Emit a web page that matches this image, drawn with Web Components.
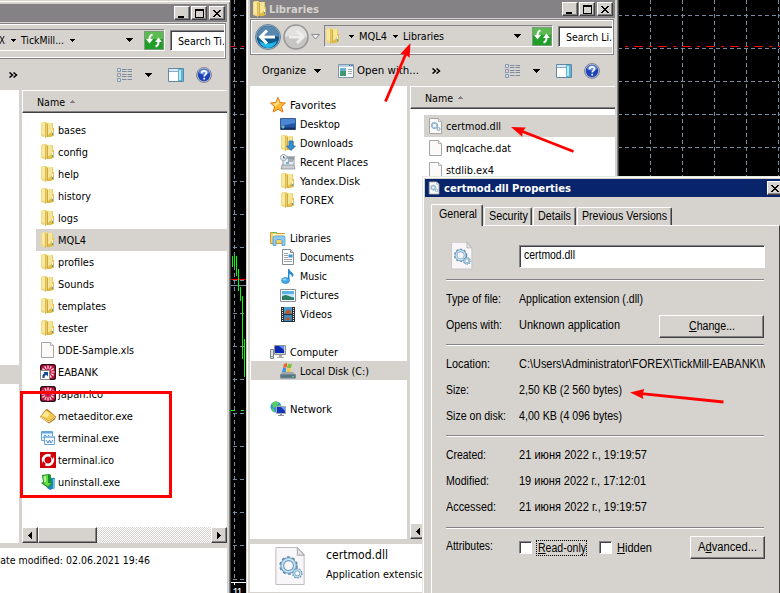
<!DOCTYPE html>
<html lang="en"><head><meta charset="utf-8"><title>Desktop</title>
<style>
html,body{margin:0;height:593px;overflow:hidden;background:#000}
body{position:relative;font:11px/19px "DejaVu Sans Condensed","DejaVu Sans",sans-serif;color:#000}
price-chart,mark-layer{position:absolute;left:0;top:0}
explorer-window{position:absolute}
#w1{left:-142px;top:0}
#w2{left:246px;top:-4px}
prop-dialog{position:absolute;left:422px;top:176px}
</style></head><body>
<price-chart></price-chart>

<explorer-window id="w1" query="Search Ti..." qw="53">
  <span slot="crumbs" style="display:flex;align-items:center;padding-left:62px"><fit-text w="6">X</fit-text><ui-icon name="down" style="margin:0 5px 0 6px"></ui-icon><fit-text w="43">TickMill...</fit-text><ui-icon name="down" style="margin-left:6px"></ui-icon></span>
  <tree-item slot="tree" style="margin-top:266px" selected></tree-item>
  <file-item slot="files" icon="folder" w="28">bases</file-item>
  <file-item slot="files" icon="folder" w="30">config</file-item>
  <file-item slot="files" icon="folder" w="21">help</file-item>
  <file-item slot="files" icon="folder" w="33">history</file-item>
  <file-item slot="files" icon="folder" w="20">logs</file-item>
  <file-item slot="files" icon="folder" w="28" selected>MQL4</file-item>
  <file-item slot="files" icon="folder" w="36">profiles</file-item>
  <file-item slot="files" icon="folder" w="36">Sounds</file-item>
  <file-item slot="files" icon="folder" w="48">templates</file-item>
  <file-item slot="files" icon="folder" w="30">tester</file-item>
  <file-item slot="files" icon="file" w="76">DDE-Sample.xls</file-item>
  <file-item slot="files" icon="shortcut" w="40">EABANK</file-item>
  <file-item slot="files" icon="japan" w="45">japan.ico</file-item>
  <file-item slot="files" icon="editor" w="75">metaeditor.exe</file-item>
  <file-item slot="files" icon="term" w="61">terminal.exe</file-item>
  <file-item slot="files" icon="red" w="56">terminal.ico</file-item>
  <file-item slot="files" icon="uninst" w="62">uninstall.exe</file-item>
  <div slot="details" style="padding:3px 0 0 131px"><fit-text w="157">Date modified: 02.06.2021 19:46</fit-text></div>
</explorer-window>

<explorer-window id="w2" heading="Libraries" query="Search Li..." qw="52">
  <span slot="crumbs" style="display:flex;align-items:center"><ui-icon name="folder" style="margin-right:8px"></ui-icon><ui-icon name="down" style="margin-right:5px"></ui-icon><fit-text w="28">MQL4</fit-text><ui-icon name="down" style="margin:0 5px 0 6px"></ui-icon><fit-text w="41">Libraries</fit-text></span>
  <tree-item slot="tree" icon="star" w="46" top>Favorites</tree-item>
  <tree-item slot="tree" icon="desktop" w="40">Desktop</tree-item>
  <tree-item slot="tree" icon="downloads" w="53">Downloads</tree-item>
  <tree-item slot="tree" icon="recent" w="68">Recent Places</tree-item>
  <tree-item slot="tree" icon="folder" w="60">Yandex.Disk</tree-item>
  <tree-item slot="tree" icon="folder" w="34">FOREX</tree-item>
  <tree-item slot="tree" icon="libs" w="41" top style="margin-top:19px">Libraries</tree-item>
  <tree-item slot="tree" icon="docs" w="54">Documents</tree-item>
  <tree-item slot="tree" icon="music" w="27">Music</tree-item>
  <tree-item slot="tree" icon="pics" w="39">Pictures</tree-item>
  <tree-item slot="tree" icon="video" w="32">Videos</tree-item>
  <tree-item slot="tree" icon="computer" w="48" top style="margin-top:19px">Computer</tree-item>
  <tree-item slot="tree" icon="disk" w="69" selected>Local Disk (C:)</tree-item>
  <tree-item slot="tree" icon="network" w="42" top style="margin-top:19px">Network</tree-item>
  <file-item slot="files" icon="dll" w="55" selected>certmod.dll</file-item>
  <file-item slot="files" icon="file" w="65">mqlcache.dat</file-item>
  <file-item slot="files" icon="file" w="48">stdlib.ex4</file-item>
  <div slot="details" style="display:flex;padding:3px 0 0 25px"><ui-icon name="bigdll" style="width:31px;height:39px;margin-right:20px"></ui-icon><div style="margin-top:-1px"><fit-text w="62" style="font-size:13px;line-height:18px">certmod.dll</fit-text><br><fit-text w="104">Application extension</fit-text></div></div>
</explorer-window>

<prop-dialog></prop-dialog>
<mark-layer></mark-layer>

<script>
const F='#d6d3ce', G='#848284', D='#424142';
const page='<path d="M1.500.5h9l3 3v12h-12z" fill="#fbfaf8" stroke="#a5a5a5"/><path d="M10.500 .5v3h3" fill="#e8e8e8" stroke="#b5b5b5"/>';
const gear=(x,y,r,s)=>`<g transform="translate(${x} ${y})" fill="none"><circle r="${r+s*.45}" stroke="#5a86a8" stroke-width="${s*.6}" stroke-dasharray="${r*.42} ${r*.4}"/><circle r="${r}" stroke="#6b9cc0" stroke-width="${s}"/><circle r="${r}" stroke="#cbe4f5" stroke-width="${s*.45}"/></g>`;
const folder='<path d="M1 1l2-1h4v15H4l-3-1z" fill="#f0da82"/><path d="M6 1h7v13l-4 1H6z" fill="#ebcf66"/><path d="M2 1h3v12l-3-1z" fill="#f9e9a0"/><path d="M5 1h1v15H5z" fill="#d9b958"/><path d="M7 2h1v13H7z" fill="#cda944"/><path d="M8 1h4v8l-4 4z" fill="#f6e497"/><path d="M8 13l5-3v4l-3 1H8z" fill="#dfbb48"/><path d="M13 6h1v8h-1z" fill="#e2bd4b"/><path d="M12 8h1v3h-1z" fill="#fff"/><path d="M12 11h1v2h-1z" fill="#3ba2d8"/>';
const rays=Array.from({length:12},(_,i)=>`<path d="M8 8L7.200 1.500h1.600z" fill="#fbe4ea" transform="rotate(${i*30} 8 8)"/>`).join('');
const japan=`<rect x=".5" y=".5" width="15" height="15" rx="3" fill="#c3123f" stroke="#2b1118" stroke-width="1.500"/>${rays}<circle cx="8" cy="8" r="3" fill="#d0103c"/>`;
const ICONS={
 folder,
 file:page,
 dll:page+gear(6.500,7.500,2.4,1.5)+gear(10.500,11,1.300,1),
 shortcut:japan+'<path d="M.5 6.500h9v9h-9z" fill="#fff" stroke="#8a8a8a"/><path d="M2.500 14c-.5-3 .5-4.500 2-4.500L3.500 8H8v4.500L6.500 11c-1.500 0-2 1-2 3z" fill="#174a94"/>',
 japan,
 editor:'<path d="M0 9l6-8 2 .5 8 7-1 3-6 4z" fill="#b67a16"/><path d="M1 8l5-6 9 6-6 5z" fill="#f4c94f"/><path d="M2 8l4-5 4 2.500-3 4z" fill="#ffe795"/><path d="M1 9l8 5 6-5" stroke="#fff0b0" fill="none"/>',
 term:'<path d="M1.500 1.500h11v9h-11z" fill="#eaf5fd" stroke="#66a4d8"/><path d="M2 1.500h10v2H2z" fill="#65a8e0"/><path d="M3 8l2-3 2 2 2-2" stroke="#5b9bd5" fill="none"/><path d="M4.500 6.500h10v8h-10z" fill="#f6fbff" stroke="#66a4d8"/><path d="M5 6h9v2H5z" fill="#8dbfe9"/><path d="M6 10l2 3 1.500-3L11 13l2-3" stroke="#4a86c0" fill="none"/>',
 red:'<path d="M0 0h16v16H0z" fill="#cf0006"/><circle cx="8" cy="8" r="4.800" fill="none" stroke="#fff" stroke-width="2.800"/><path d="M10 4l4-3-1 6zM6 12l-4 3 1-6z" fill="#cf0006"/><ellipse cx="8" cy="8" rx="3" ry="1.800" fill="#cf0006" transform="rotate(-40 8 8)"/>',
 uninst:'<path d="M8 4h7v10l-5 2-3-2z" fill="#2583c3"/><path d="M13 5h2v9l-2 1z" fill="#6bc0ed"/><path d="M2 1l7-1 2 1v7l2 1-5 5-7-5 2-1z" fill="#18922c"/><path d="M3 2l5-1v8h3l-3 3.500L3 9h1z" fill="#65dc45"/><path d="M4 2l2 0v6H4z" fill="#baf592"/>',
 star:'<path d="M8 .5l2.200 5 5.300.5-4 3.500 1.500 5.500L8 12.200 3.200 15l1.300-5.500-4-3.500 5.300-.5z" fill="#ffb92e" stroke="#e07a18"/><path d="M8 2.500L9.300 6 6 9 3 7l3.500-.8z" fill="#ffe694"/>',
 desktop:'<path d="M.5 2.500h15v11H.5z" fill="#2455a4" stroke="#365d8c"/><path d="M1 3h14v4L1 10z" fill="#4a86d4"/><path d="M1 11.500h14v2H1z" fill="#172c59"/><circle cx="3" cy="11" r="1.500" fill="#50c0f0"/><path d="M1.500 10h1.500v1H1.500z" fill="#f58a20"/>',
 downloads:folder+'<path d="M9 6h4v5h2.500L11 15.500 6.500 11H9z" fill="#2f8fdc" stroke="#1b65ac" stroke-width=".7"/>',
 recent:'<path d="M3 4h11v8H3z" fill="#e8eef2" stroke="#929ba2"/><path d="M7 3h8M8 5h6M8 7h5" stroke="#63727f"/><path d="M2 11h12l1 4H1z" fill="#c8ced3" stroke="#818a91" stroke-width=".7"/><circle cx="3.500" cy="3.500" r="3" fill="#f0f5f8" stroke="#8fa0ac"/><path d="M3.500 2v2H5" stroke="#456" fill="none"/><path d="M6 8h3v2H6z" fill="#6bb0dd"/>',
 libs:'<path d="M.5 2.500h5l1 1h8v10H.5z" fill="#f1d36a" stroke="#c99a38"/><path d="M3 4h12v3H3z" fill="#fff1b0"/><path d="M2 2h5v1H2z" fill="#63b956"/><path d="M3 7l2-1h9l1 1v8.500h-3v-5l-1-1H7l-1 1v5H3z" fill="#8dcbf0" stroke="#4794c9" stroke-width=".7"/>',
 docs:'<path d="M2.500.5h8l3 3v12h-11z" fill="#fff" stroke="#828b92"/><path d="M10.500.5v3h3" fill="#ddd" stroke="#828b92"/><path d="M4 4.500h4M4 6.500h4M4 8.500h4M4 10.500h8M4 12.500h8" stroke="#9aa5ae"/><path d="M8.500 5.500h4v3h-4z" fill="#3d94d0"/>',
 music:'<path d="M8 1h1.500c0 3 4 3 4 6.500l-1.500 2c0-3-2-3.500-2.500-3.500v6H8z" fill="#288acb"/><ellipse cx="5.500" cy="12.500" rx="4" ry="3" fill="#43aaea" stroke="#1a76b7" stroke-width=".6"/><ellipse cx="4.500" cy="11.500" rx="2" ry="1" fill="#93d7fa"/>',
 pics:'<path d="M.5 2.500h15v12H.5z" fill="#fff" stroke="#8b9299"/><path d="M2 4h12v9H2z" fill="#59b4e3"/><path d="M2 7h12v3H2z" fill="#bfe6f2"/><path d="M2 9l4-1 8 3v2H2z" fill="#2c7d65"/>',
 video:'<path d="M1 1h14v15H1z" fill="#292e33"/><path d="M4 1h8v7H4z" fill="#4a9fd0"/><path d="M4 9h8v6H4z" fill="#3b89bf"/><path d="M5 6l3-3 3 2v3H5zM6 12l3-1 2 3H5z" fill="#ad5d3d"/><path d="M2.500 2v14M13.500 2v14" stroke="#e8eef2" stroke-dasharray="1 1"/>',
 computer:'<path d="M4.500 1.500h11v9h-11z" fill="#cfd3d6" stroke="#8c9298"/><path d="M5 2h9v7H5z" fill="#0b26b5"/><path d="M9 2h5v4z" fill="#5f8df0"/><path d="M9 11h3v2h2v1H7v-1h2z" fill="#aaa"/><path d="M.5 5.500h3v9h-3z" fill="#dfe2e4" stroke="#7e8589"/><path d="M1 12h2v1H1z" fill="#4fc34b"/>',
 disk:'<path d="M2 9h11l2.500 3v3.500H.5V12z" fill="#9ba5ad"/><path d="M.5 11.500h15v3.500H.5z" fill="#557584" stroke="#7d8990"/><path d="M12 13h2v1h-2z" fill="#53df67"/><path d="M4 1l3-1v4l-4 1z" fill="#f0642a"/><path d="M8 1h4l-1 4H7z" fill="#7cc23f"/><path d="M3 5l3-.5V9L2 9z" fill="#3e95e4"/><path d="M7 5.500h4L10 9H7z" fill="#f8c832"/>',
 network:'<circle cx="6" cy="6" r="5.500" fill="#2c8fdd"/><path d="M2 2l4-2 3 2-3 4-3 1zM1 7l3 1 1 3-2 0zM8 4l3 0-1 4z" fill="#5bd061"/><path d="M6.500 5.500h9v7h-9z" fill="#1733b8" stroke="#a5acb4"/><path d="M11 6h4v4z" fill="#6f9df0"/><path d="M10 13h2v1h2v1H8v-1h2z" fill="#8b9298"/>',
 views:'<path d="M1.500 1.500h3v3h-3zM1.500 6.500h3v3h-3zM1.500 11.500h3v3h-3z" fill="#fff" stroke="#8598ad"/><path d="M2.500 2.500h1v1h-1z" fill="#4a7fc0"/><path d="M2.500 7.500h1v1h-1z" fill="#d03030"/><path d="M2.500 12.500h1v1h-1z" fill="#4a7fc0"/><path d="M6 2.500h10M6 4.500h10M6 7.500h10M6 9.500h10M6 12.500h10" stroke="#7a8b9f" stroke-dasharray="4.500 1"/>',
 pane:'<path d="M.5 1.500h15v13H.5z" fill="#fff" stroke="#5f88a8"/><path d="M1 2h14v2H1z" fill="#dcebf5"/><path d="M1 4.500h9" stroke="#88a8c4"/><path d="M10 2h5v12h-5z" fill="#5fb4d0"/><path d="M11 3h2v10h-2z" fill="#b6e9f5"/>',
 help:'<circle cx="8" cy="8" r="7.500" fill="#b8bdc9" stroke="#82889a"/><circle cx="8" cy="8" r="6.200" fill="#1c43b8"/><path d="M3 6a5.200 5.200 0 0 1 10 0q-5 3-10 0" fill="#6f95e4"/><path d="M5.700 6.300c0-3.300 4.800-3 4.800-.4 0 1.700-2.300 1.700-2.300 3.600M8.200 10.800v1.700" stroke="#fff" stroke-width="1.700" fill="none"/>',
 open:'<path d="M.5 1.500h15v13H.5z" fill="#fff" stroke="#8096ad"/><path d="M1 2h14v2H1z" fill="#b9cfe6"/><path d="M11 2.500h4" stroke="#345d8d" stroke-dasharray="1 .7"/><path d="M2 5h6v8H2z" fill="#3f9774"/><path d="M2 5h6v3H2z" fill="#67aed0"/><path d="M10 6.500h4M10 8.500h4M10 10.500h4" stroke="#9aaabb"/>',
 bigdll:'<path d="M.5.500h22l7 7v31H.5z" fill="#f8f6f8" stroke="#bdbabc"/><path d="M22.500.5v8h7z" fill="#e4e4e6" stroke="#a9a9ad"/>'+gear(13.500,19,6.500,4)+gear(22.500,27,3.500,2.500),
 down:'<path d="M0 0h5v1H4v1H3v1H2V2H1V1H0z"/>',
 drop:'<path d="M0 0h7v1H6v1H5v1H4v1H3V3H2V2H1V1H0z"/>',
 sort:'<path d="M0 3h5V2H4V1H3V0H2v1H1v1H0z" fill="#848284"/>',
 more:'<path d="M.5.5l3 2.500-3 2.500M4.500.5l3 2.500-3 2.500" fill="none" stroke="#000" stroke-width="1.500"/>',
 go:'<rect x=".5" y=".5" width="19" height="18" fill="#1f9f2a" stroke="#7c9d7c"/><path d="M1 1h18v7H1z" fill="#5bbb52"/><path d="M8.500 3.500C6.500 4 5.500 5.500 5.500 8.500M11.500 15.500c2-.5 3-2 3-5" stroke="#fff" stroke-width="2" fill="none"/><path d="M2 8h7l-3.500 4.500zM11 11h7l-3.500-4.500z" fill="#fff"/>',
 back:'<circle cx="13" cy="13" r="12.500" fill="#a9bccb" stroke="#65819a"/><circle cx="13" cy="13" r="11.300" fill="#11588f"/><path d="M2 13a11 11 0 0 1 22 0q-11-4-22 0" fill="#5988ae"/><path d="M4 17q9 5 18 0-3 7-9 7t-9-7" fill="#21b9ec"/><path d="M12 6.500L5.500 13l6.500 6.500M6 13h14" stroke="#fff" stroke-width="3" fill="none"/>',
 fwd:'<circle cx="13" cy="13" r="12" fill="#c6c5c3" stroke="#969696" stroke-width="1.500"/><path d="M2 13a11 11 0 0 1 22 0q-11-4-22 0" fill="#e2e1df"/><path d="M14 7l6 6-6 6M6 13h13" stroke="#efeeed" stroke-width="3" fill="none"/>',
 hist:'<path d="M.5.5h8L4.500 5z" fill="#eee" stroke="#8b8d98"/>',
 left:'<path d="M4 0v7H3V6H2V5H1V4H0V3h1V2h1V1h1V0z"/>',
 right:'<path d="M0 0v7h1V6h1V5h1V4h1V3H3V2H2V1H1V0z"/>',
 min:'<path d="M0 7h6v2H0z"/>',
 max:'<path d="M0 0h9v9H0zM1 2v6h7V2z" fill-rule="evenodd"/>',
 close:'<path d="M0 1h2v1h1v1h2V2h1V1h2v1H7v1H6v1H5v1h1v1h1v1h1v1H6V7H5V6H3v1H2v1H0V7h1V6h1V5h1V4H2V3H1V2H0z"/>'
};
const SZ={down:[5,3],drop:[7,4],sort:[5,3],more:[9,6],go:[20,19],back:[26,26],fwd:[26,26],hist:[9,6],left:[4,7],right:[4,7],min:[8,9],max:[9,9],close:[8,9],bigdll:[31,40]};
const make=(name,html)=>customElements.define(name,class extends HTMLElement{
  constructor(){super();this.attachShadow({mode:'open'})}
  connectedCallback(){this.shadowRoot.innerHTML=typeof html==='function'?html(this):html}
});
make('ui-icon',e=>{const n=e.getAttribute('name'),[w,h]=SZ[n]||[16,16];
  return `<style>:host{display:block;flex:none;width:${w}px;height:${h}px}svg{display:block;width:100%;height:100%}</style><svg viewBox="0 0 ${w} ${h}">${ICONS[n]||''}</svg>`});
/* Text condensed or widened to a fixed advance. */
customElements.define('fit-text',class extends HTMLElement{
  constructor(){super();this.attachShadow({mode:'open'}).innerHTML='<style>:host{display:inline-block;flex:none;white-space:nowrap;vertical-align:top}span{display:inline-block;transform-origin:0 50%;white-space:nowrap}</style><span><slot></slot></span>'}
  connectedCallback(){const w=+this.getAttribute('w');this.style.width=w+'px';const s=this.shadowRoot.querySelector('span');const n=s.getBoundingClientRect().width;if(n)s.style.transform=`scaleX(${w/n})`}
});
make('tree-item',e=>`<style>:host{display:flex;align-items:center;height:19px;line-height:19px;margin-left:1px;padding-left:${e.hasAttribute('top')?19:29}px;gap:4px}:host([selected]){background:${F}}fit-text{padding-top:2px}</style>${e.hasAttribute('icon')?`<ui-icon name="${e.getAttribute('icon')}"></ui-icon><fit-text w="${e.getAttribute('w')}">${e.textContent}</fit-text>`:''}`);
make('file-item',e=>`<style>:host{display:flex;align-items:center;height:22px;line-height:22px;margin-left:14px;padding-left:4px;gap:2px}:host([selected]){background:${F}}fit-text{padding-top:2px}</style><ui-icon name="${e.getAttribute('icon')}"></ui-icon><fit-text w="${e.getAttribute('w')}">${e.textContent}</fit-text>`);
make('cap-button',e=>`<style>:host{display:flex;box-sizing:border-box;width:16px;height:14px;background:${F};border:1px solid;border-color:#fff ${D} ${D} #fff;box-shadow:inset -1px -1px ${G};align-items:center;justify-content:center}</style><ui-icon name="${e.getAttribute('name')}"></ui-icon>`);
make('push-button',`<style>:host{display:flex;box-sizing:border-box;height:23px;line-height:20px;background:${F};border:1px solid;border-color:#fff ${D} ${D} #fff;box-shadow:inset -1px -1px ${G};justify-content:center}</style><slot></slot>`);
make('explorer-window',e=>`<style>
:host{display:flex;flex-direction:column;box-sizing:border-box;width:373px;height:600px;background:${F};padding:4px;border-right:1px solid ${D};box-shadow:inset 1px 0 ${F},inset 2px 0 #fff,inset 0 1px ${F},inset 0 2px #fff,inset -1px 0 ${G};padding-right:3px;overflow:hidden}
.title{height:18px;flex:none;background:${G};display:flex;align-items:center;color:${F};font-weight:bold;padding:0 2px 0 2px;gap:1px}
.sp{flex:1}
.nav{height:36px;box-sizing:border-box;flex:none;margin-top:1px;border:1px solid ${G};box-shadow:inset 1px 1px #fff,inset -1px -1px #fff;display:flex;align-items:center;padding-left:4px;margin-right:1px;overflow:hidden}
.addr{width:229px;height:22px;box-sizing:border-box;border:1px solid;border-color:${G} #fff #fff ${G};margin:0 5px 2px 4px;display:flex;align-items:center;line-height:23px;flex:none}
.find{flex:1;height:21px;box-sizing:border-box;background:#fff;border:1px solid ${G};border-right:0;border-bottom-color:#fff;box-shadow:inset 1px 1px ${D};padding-left:7px;margin-bottom:2px;overflow:hidden;margin-right:1px}
.find fit-text{line-height:21px}
.bar{height:31px;flex:none;display:flex;align-items:center;padding-left:12px;line-height:30px}
.main{height:453px;flex:none;display:flex}
.tree{width:157px;flex:none;background:#fff;padding-top:9px;box-sizing:border-box;overflow:hidden;white-space:nowrap;font-size:11px}
.list{flex:1;margin-left:3px;background:#fff;display:flex;flex-direction:column}
.head{height:23px;flex:none;box-sizing:border-box;background:${F};border-top:1px solid #fff;border-left:1px solid #fff;border-bottom:1px solid ${D};box-shadow:inset 0 -1px ${G};display:flex;align-items:center;gap:5px;padding-left:14px;line-height:22px}
.head fit-text{padding-top:3px}
.rows{flex:1;padding-top:6px}
.scroll{height:16px;flex:none;display:flex;background:repeating-conic-gradient(#fff 0 25%,${F} 0 50%) 0 0/2px 2px}
.scroll cap-button{height:16px}
.thumb{width:59px;box-sizing:border-box;background:${F};border:1px solid;border-color:#fff ${D} ${D} #fff;box-shadow:inset -1px -1px ${G}}
.det{height:48px;flex:none;margin-top:5px;background:#fff;overflow:hidden;white-space:nowrap}
</style>
<div class="title">${e.hasAttribute('heading')?`<ui-icon name="folder"></ui-icon><fit-text w="50">${e.getAttribute('heading')}</fit-text>`:''}<span class="sp"></span><cap-button name="min"></cap-button><cap-button name="max"></cap-button><cap-button name="close" style="margin-left:1px"></cap-button></div>
<div class="nav"><ui-icon name="back"></ui-icon><ui-icon name="fwd" style="margin:0 2px"></ui-icon><ui-icon name="hist"></ui-icon>
<div class="addr"><slot name="crumbs"></slot><span class="sp"></span><ui-icon name="drop" style="margin-right:11px"></ui-icon><ui-icon name="go"></ui-icon></div>
<div class="find"><fit-text w="${e.getAttribute('qw')}">${e.getAttribute('query')}</fit-text></div></div>
<div class="bar">${e.hasAttribute('heading')?`<fit-text w="44">Organize</fit-text><ui-icon name="drop" style="margin:0 17px 0 8px"></ui-icon><ui-icon name="open"></ui-icon><fit-text w="62" style="margin:0 13px 0 3px">Open with...</fit-text>`:'<span style="width:135px"></span>'}<ui-icon name="more"></ui-icon><span class="sp"></span><ui-icon name="views"></ui-icon><ui-icon name="drop" style="margin:0 16px 0 13px"></ui-icon><ui-icon name="pane"></ui-icon><ui-icon name="help" style="margin:0 15px 0 12px"></ui-icon></div>
<div class="main"><div class="tree"><slot name="tree"></slot></div>
<div class="list"><div class="head"><fit-text w="28">Name</fit-text><ui-icon name="sort"></ui-icon></div><div class="rows"><slot name="files"></slot></div>
<div class="scroll"><cap-button name="left"></cap-button><div class="thumb"></div><span class="sp"></span><cap-button name="right"></cap-button></div></div></div>
<div class="det"><slot name="details"></slot></div>`);
const row=(l,lw,v,vw)=>`<div class="row"><div class="lab"><fit-text w="${lw}">${l}</fit-text></div><div class="val"><fit-text w="${vw}">${v}</fit-text></div></div>`;
make('tab-label',`<style>:host{display:block;box-sizing:border-box;height:18px;line-height:17px;border:1px solid;border-color:#fff ${D} transparent #fff;border-bottom:0;box-shadow:inset -1px 0 ${G};border-radius:2px 2px 0 0;padding-left:4px;flex:none}:host([on]){height:22px;line-height:18px;background:${F};padding-left:7px;margin-bottom:-1px}</style><slot></slot>`);
make('prop-dialog',()=>`<style>
:host{display:block;box-sizing:border-box;width:370px;height:430px;background:${F};box-shadow:inset 1px 1px #eae8e4,inset 2px 2px #fff;padding:3px 0 0 3px;font:12px/18px "Liberation Sans",Arial,sans-serif}
.title{height:18px;background:#08246b;color:#fff;display:flex;align-items:center;padding-left:2px;font:bold 11px/18px "DejaVu Sans Condensed","DejaVu Sans",sans-serif}
.title fit-text{margin-left:3px;padding-top:1px}
.title>ui-icon{width:13px;height:14px;margin-left:1px}
.title cap-button{margin-left:196px}
.tabs{height:20px;margin:8px 0 0 6px;display:flex;align-items:flex-end;gap:1px;position:relative;z-index:1}
.page{height:380px;margin:0 0 0 6px;width:349px;box-sizing:border-box;border:1px solid;border-color:#fff ${D} ${D} #fff;padding:16px 14px 0 14px}
.top{display:flex;align-items:center;height:28px}
.in{margin-left:43px;width:246px;height:23px;box-sizing:border-box;background:#fff;border:1px solid ${G};border-right-color:#fff;border-bottom-color:#fff;box-shadow:inset 1px 1px ${D};padding-left:4px;line-height:19px}
hr{margin:0;border:0;height:1px;background:${G};border-bottom:1px solid #fff;width:318px}
.row{display:flex;height:26px;line-height:26px;width:319px}
.lab{width:73px;flex:none}.val{flex:1;overflow:hidden}
.att{display:flex;align-items:flex-start;padding-top:7px}
.cb{width:13px;height:13px;box-sizing:border-box;background:#fff;border:1px solid;border-color:${G} #fff #fff ${G};box-shadow:inset 1px 1px ${D};margin-top:5px}
.focus{outline:1px dotted #000;height:14px;line-height:14px;width:49px;margin:5px 13px 0 5px}
</style>
<div class="title"><ui-icon name="dll"></ui-icon><fit-text w="127">certmod.dll Properties</fit-text><cap-button name="close"></cap-button></div>
<div class="tabs"><tab-label on style="width:52px"><fit-text w="38">General</fit-text></tab-label><tab-label style="width:48px"><fit-text w="39">Security</fit-text></tab-label><tab-label style="width:43px"><fit-text w="33">Details</fit-text></tab-label><tab-label style="width:95px"><fit-text w="85">Previous Versions</fit-text></tab-label></div>
<div class="page"><div class="top"><ui-icon name="bigdll" style="width:24px;height:28px;margin-left:4px"></ui-icon><div style="width:2px"></div><div class="in"><fit-text w="51">certmod.dll</fit-text></div></div>
<hr style="margin-top:9px">
<div style="padding:5px 0 6px;display:flex"><div>${row('Type of file:',55,'Application extension (.dll)',124)}${row('Opens with:',56,'Unknown application',101)}</div><push-button style="width:105px;margin:29px 0 0 -106px"><fit-text w="46"><u>C</u>hange...</fit-text></push-button></div>
<hr>
<div style="padding:5px 0 6px">${row('Location:',44,'C:\\Users\\Administrator\\FOREX\\TickMill-EABANK\\M',250)}${row('Size:',23,'2,50 KB (2 560 bytes)',103)}${row('Size on disk:',60,'4,00 KB (4 096 bytes)',103)}</div>
<hr>
<div style="padding:5px 0 7px">${row('Created:',40,'21 июня 2022 г., 19:19:57',128)}${row('Modified:',43,'19 июня 2022 г., 17:12:01',127)}${row('Accessed:',50,'21 июня 2022 г., 19:19:57',128)}</div>
<hr>
<div class="att"><div class="lab" style="line-height:20px"><fit-text w="47">Attributes:</fit-text></div><div class="cb"></div><div class="focus"><fit-text w="48" style="margin-left:1px"><u>R</u>ead-only</fit-text></div><div class="cb"></div><fit-text w="35" style="margin:3px 0 0 5px"><u>H</u>idden</fit-text><push-button style="width:75px;margin:0 0 0 38px"><fit-text w="59">A<u>d</u>vanced...</fit-text></push-button></div>
</div>`);
make('price-chart',()=>{
 const xs=[234,650,682,714,746,778],ys=[15,48,81,114,147,181,214,247,280,313,346,379,413,446,479,512,545,579];
 return `<style>:host{display:block}svg{display:block}</style><svg width="780" height="593" shape-rendering="crispEdges"><g stroke="#778ca0">${xs.map(x=>`<path d="M${x}.500 0V578" stroke-dasharray="4 3"/>`).join('')}${ys.map(y=>`<path d="M226 ${y}.500H780" stroke-dasharray="4 3"/>`).join('')}</g>
 <path d="M231 285.500h15" stroke="#778ca0"/><path d="M231 279.500h15" stroke="#f00"/><path d="M226 46.500H780" stroke="#f00" stroke-dasharray="9 6 3 6"/><path d="M226 410.500H250" stroke="#0f0" stroke-dasharray="9 6 3 6"/>
 <g fill="#0f0"><path d="M232 256h1v11h-1zM234 255h1v11h-1zM236 256h1v20h-1zM238 269h1v22h-1zM240 287h1v14h-1zM242 296h1v63h-1zM244 339h1v38h-1z"/></g>
 <path d="M231 582.500h15M234.500 582v3" stroke="#fff"/><text x="232.500" y="596" fill="#fff" font-family="Liberation Sans" font-size="11" textLength="10">11</text></svg>`});
make('mark-layer',()=>{
 const arrow=(x1,y1,x2,y2)=>{const L=Math.hypot(x2-x1,y2-y1),a=Math.atan2(y2-y1,x2-x1)*180/Math.PI;return `<g transform="translate(${x1} ${y1}) rotate(${a})" fill="#f00"><path d="M0-1.400H${L-9}V1.400H0z"/><path d="M${L} 0l-14-5 1.500 5-1.500 5z"/></g>`};
 return `<style>:host{display:block;pointer-events:none}svg{display:block}</style><svg width="780" height="593"><path d="M21.500 392.500h149v104h-149z" fill="none" stroke="#f00" stroke-width="3"/>${arrow(385.500,101.500,410.500,43)}${arrow(573.500,151.500,511,127)}${arrow(723.500,402,630,392.500)}</svg>`});
</script>
</body></html>
